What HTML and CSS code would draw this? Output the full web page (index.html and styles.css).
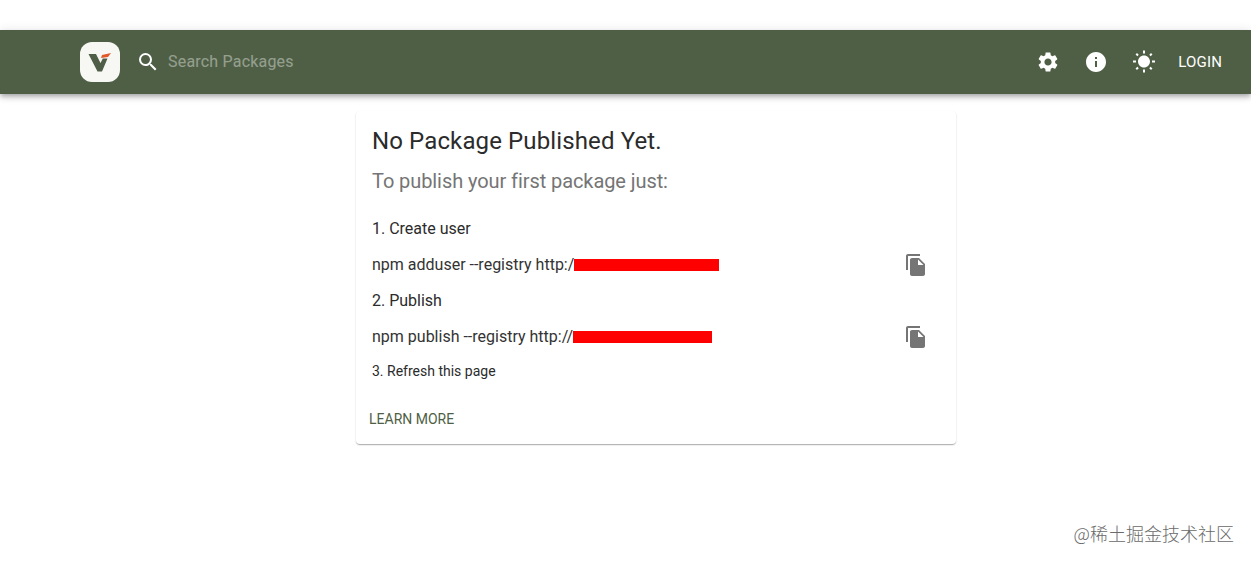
FILE: index.html
```html
<!DOCTYPE html>
<html lang="en">
<head>
<meta charset="utf-8">
<title>Verdaccio</title>
<link rel="stylesheet" href="styles.css">
</head>
<body>
<header class="bar">
  <div class="bar-left">
    <div class="logo">
      <svg width="40" height="40" viewBox="0 0 40 40"><path d="M8.500 12H16l4.500 9 2.300-4.500h4.700L22 29.500h-4.500z" fill="#4f5f47"/><path d="M22 13l9-2-3 4-7 1z" fill="#e2572b"/></svg>
    </div>
    <svg class="search-icon" width="24" height="24" viewBox="0 0 24 24"><path fill="#fff" d="M15.500 14h-.79l-.28-.27A6.470 6.470 0 0 0 16 9.500 6.500 6.500 0 1 0 9.500 16c1.610 0 3.090-.59 4.230-1.570l.27.28v.79l5 4.990L20.490 19l-4.990-5zm-6 0C7.010 14 5 11.990 5 9.500S7.010 5 9.500 5 14 7.010 14 9.500 11.990 14 9.500 14z"/></svg>
    <span class="search-text">Search Packages</span>
  </div>
  <div class="bar-right">
    <svg class="bar-icon" width="24" height="24" viewBox="0 0 24 24"><path fill="#fff" d="M19.140 12.940c.04-.3.060-.61.060-.94 0-.32-.02-.64-.07-.94l2.030-1.580a.49.490 0 0 0 .12-.61l-1.920-3.320a.488.488 0 0 0-.59-.22l-2.390.96c-.5-.38-1.030-.7-1.620-.94l-.36-2.540a.484.484 0 0 0-.48-.41h-3.840c-.24 0-.43.170-.47.410l-.36 2.540c-.59.240-1.130.57-1.620.94l-2.390-.96c-.22-.08-.47 0-.59.220L2.740 8.870c-.12.210-.08.470.12.610l2.030 1.580c-.05.300-.09.630-.09.940s.02.640.07.940l-2.030 1.580a.49.490 0 0 0-.12.610l1.920 3.320c.12.220.37.290.59.220l2.390-.96c.5.380 1.030.7 1.620.94l.36 2.540c.05.240.24.410.48.410h3.840c.24 0 .44-.17.47-.41l.36-2.540c.59-.24 1.130-.56 1.620-.94l2.390.96c.22.080.47 0 .59-.22l1.920-3.320c.12-.22.070-.47-.12-.61l-2.010-1.580zM12 15.600c-1.980 0-3.600-1.620-3.600-3.600s1.620-3.600 3.600-3.600 3.600 1.620 3.600 3.600-1.620 3.600-3.600 3.600z"/></svg>
    <svg class="bar-icon" width="24" height="24" viewBox="0 0 24 24"><path fill="#fff" d="M12 2C6.480 2 2 6.480 2 12s4.480 10 10 10 10-4.480 10-10S17.520 2 12 2zm1 15h-2v-6h2v6zm0-8h-2V7h2v2z"/></svg>
    <svg class="bar-icon bar-icon-last" width="24" height="24" viewBox="0 0 24 24"><path fill="#fff" d="M6.760 4.840l-1.800-1.790-1.410 1.410 1.790 1.790 1.420-1.410zM4 10.500H1v2h3v-2zm9-9.950h-2V3.500h2V.55zm7.450 3.910l-1.410-1.410-1.790 1.790 1.410 1.410 1.790-1.790zm-3.210 13.700l1.790 1.800 1.410-1.410-1.800-1.790-1.400 1.400zM20 10.500v2h3v-2h-3zm-8-5c-3.310 0-6 2.690-6 6s2.690 6 6 6 6-2.690 6-6-2.690-6-6-6zm-1 16.950h2V19.500h-2v2.950zm-7.450-3.910l1.410 1.410 1.790-1.800-1.410-1.410-1.790 1.800z"/></svg>
    <span class="login">LOGIN</span>
  </div>
</header>
<main class="page">
  <section class="card">
    <h1 class="title">No Package Published Yet.</h1>
    <h2 class="subtitle">To publish your first package just:</h2>
    <p class="step">1. Create user</p>
    <div class="cmd-row">
      <span class="cmd">npm adduser --registry http:/<span class="redact redact-a"></span></span>
      <svg class="copy" width="24" height="24" viewBox="0 0 24 24"><path fill="#757575" d="M16 1H4c-1.100 0-2 .9-2 2v14h2V3h12V1zm-1 4l6 6v10c0 1.100-.9 2-2 2H7.990C6.890 23 6 22.100 6 21l.01-14c0-1.100.89-2 1.990-2h7zm-1 7h5.500L14 6.500V12z"/></svg>
    </div>
    <p class="step">2. Publish</p>
    <div class="cmd-row">
      <span class="cmd">npm publish --registry http://<span class="redact redact-b"></span></span>
      <svg class="copy" width="24" height="24" viewBox="0 0 24 24"><path fill="#757575" d="M16 1H4c-1.100 0-2 .9-2 2v14h2V3h12V1zm-1 4l6 6v10c0 1.100-.9 2-2 2H7.990C6.890 23 6 22.100 6 21l.01-14c0-1.100.89-2 1.990-2h7zm-1 7h5.500L14 6.500V12z"/></svg>
    </div>
    <p class="refresh">3. Refresh this page</p>
    <div class="actions"><span class="learn">LEARN MORE</span></div>
  </section>
</main>
<div class="watermark">@稀土掘金技术社区</div>
</body>
</html>
```
FILE: styles.css
```css
* { box-sizing: border-box; }
html, body { margin: 0; height: 100%; }
body {
  position: relative;
  padding-top: 30px;
  background: #fff;
  font-family: Roboto, "Liberation Sans", sans-serif;
  color: #2b2b2b;
  overflow: hidden;
}
.bar {
  height: 64px;
  background: #4f5f45;
  display: flex;
  align-items: center;
  justify-content: space-between;
  padding: 0 16px 0 80px;
  box-shadow: 0 2px 4px -1px rgba(0,0,0,.2), 0 4px 5px 0 rgba(0,0,0,.14), 0 1px 10px 0 rgba(0,0,0,.12);
  position: relative;
  z-index: 1;
}
.bar-left, .bar-right { display: flex; align-items: center; }
.logo {
  width: 40px;
  height: 40px;
  border-radius: 12px;
  background: #f7f8f4;
  display: flex;
  align-items: center;
  justify-content: center;
}
.search-icon { margin-left: 16px; }
.search-text {
  margin: -2px 0 0 8px;
  font-size: 16px;
  letter-spacing: .2px;
  color: #fff;
  opacity: .4;
}
.bar-icon { margin-right: 24px; }
.bar-icon-last { margin-right: 22px; }
.login {
  padding-right: 13px;
  font-size: 15px;
  letter-spacing: .15px;
  color: #fff;
}
.page { padding-left: 356px; }
.card {
  width: 600px;
  height: 333px;
  margin-top: 17px;
  background: #fff;
  border-radius: 4px;
  box-shadow: 0 1px 2px 0 rgba(0,0,0,.14), 0 1px 1px 0 rgba(0,0,0,.12), 0 2px 1px -1px rgba(0,0,0,.12);
  padding: 13px 16px 0;
  display: flex;
  flex-direction: column;
}
.title { margin: 0; font-size: 24px; font-weight: 400; letter-spacing: .12px; line-height: 34px; }
.subtitle { margin: 9px 0 0; font-size: 20px; font-weight: 400; letter-spacing: -.08px; line-height: 28px; color: #757575; }
.step { margin: 22px 0 0; font-size: 16px; line-height: 24px; }
.cmd-row {
  display: flex;
  align-items: center;
  justify-content: space-between;
  height: 24px;
  margin-top: 12px;
  padding-right: 12px;
}
.cmd-row + .step { margin-top: 12px; }
.cmd { font-size: 16px; line-height: 24px; display: flex; align-items: center; color: #333; }
.redact { display: inline-block; height: 12px; background: #fe0000; }
.redact-a { width: 145px; }
.redact-b { width: 139px; }
.refresh { margin: 12px 0 0; font-size: 14px; line-height: 20px; }
.actions { margin: 28px 0 0 -3px; }
.learn { font-size: 14px; line-height: 20px; color: #4f5f45; }
.watermark {
  position: absolute;
  right: 17px;
  top: 521px;
  font-family: "Noto Sans CJK SC", sans-serif;
  font-weight: 300;
  font-size: 18px;
  line-height: 24px;
  color: #6a6a6a;
}
```
